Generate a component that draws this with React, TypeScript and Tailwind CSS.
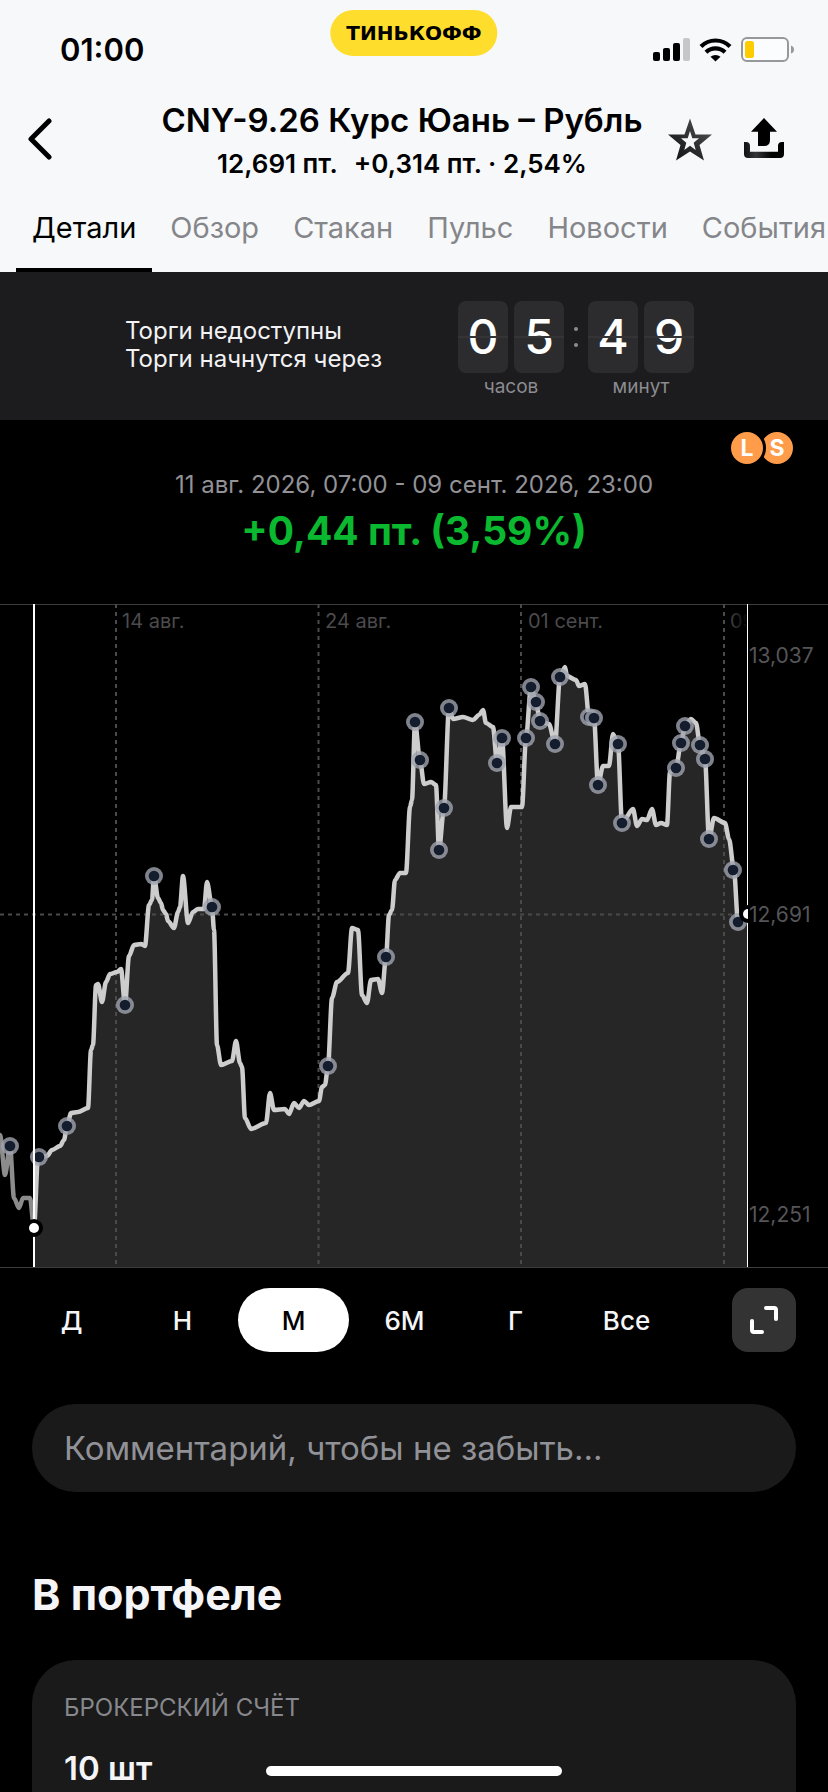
import { useState } from "react";
import clsx from "clsx";

const tabs = ["Детали", "Обзор", "Стакан", "Пульс", "Новости", "События"];
const ranges = ["Д", "Н", "М", "6М", "Г", "Все"];

const pastLine = "0,1135 5,1175 10,1146 14,1198 19,1208 23,1198 30,1198 34,1228";

const priceLine =
  "34,1228 38,1157 47,1156 52,1150 60,1146 64,1140 67,1126 71,1113 78,1112 88,1108 91,1050 93,1045 96,985 98,984 102,1002 106,982 110,974 117,972 121,969 125,1005 " +
  "129,956 134,945 141,944 145,946 149,905 152,900 154,876 158,898 161,903 163,910 166,914 168,921 174,928 178,912 180,907 183,876 188,923 193,912 198,909 204,909 207,882 212,907 " +
  "214,930 217,1045 221,1065 232,1061 236,1041 240,1063 242,1067 245,1118 251,1129 266,1123 270,1093 274,1110 285,1109 289,1114 294,1103 299,1108 304,1101 309,1105 319,1101 322,1087 325,1085 " +
  "328,1066 332,998 337,982 348,973 352,928 358,930 362,995 367,1003 371,980 378,979 382,993 386,957 389,915 392,910 395,880 400,873 406,873 410,807 412,800 415,722 " +
  "420,760 424,784 431,782 436,785 439,850 444,808 449,708 453,719 463,717 473,720 479,715 483,710 486,723 493,727 497,763 502,738 507,828 511,807 522,807 526,738 531,687 " +
  "536,702 540,721 549,724 555,744 560,677 565,667 567,676 576,680 579,686 585,684 589,717 594,718 598,785 603,766 609,766 613,734 618,744 622,823 633,809 637,826 642,819 647,820 " +
  "652,809 656,825 661,823 667,825 670,772 676,768 681,743 685,726 691,719 696,723 700,745 705,759 709,839 714,818 725,823 729,839 734,870 738,922 748,914";

const deals = [
  [10, 1146],
  [39, 1157],
  [67, 1126],
  [125, 1005],
  [154, 876],
  [212, 907],
  [328, 1066],
  [386, 957],
  [415, 722],
  [420, 760],
  [439, 850],
  [444, 808],
  [449, 708],
  [497, 763],
  [502, 738],
  [526, 738],
  [531, 687],
  [536, 702],
  [540, 721],
  [555, 744],
  [560, 677],
  [589, 717],
  [594, 718],
  [598, 785],
  [618, 744],
  [622, 823],
  [676, 768],
  [681, 743],
  [685, 726],
  [700, 745],
  [705, 759],
  [709, 839],
  [733, 870],
  [738, 922],
];

// eases every segment in and out so the peaks come out rounded
const toPath = (line: string) => {
  const points = line.split(" ").map((p) => p.split(",").map(Number));
  return points
    .map(([x, y], i) => {
      if (i === 0) return `M${x} ${y}`;
      const [px, py] = points[i - 1];
      const ease = (x - px) * 0.3;
      return `C${px + ease} ${py} ${x - ease} ${y} ${x} ${y}`;
    })
    .join("");
};

const StatusBar = () => {
  return (
    <div className="relative flex h-[98px] justify-between pl-[60px] pr-[34px]">
      <span className="pt-8 text-[31px] leading-9 font-semibold">01:00</span>
      <div className="absolute top-[10px] left-1/2 flex h-[46px] -translate-x-1/2 items-center rounded-full bg-[#ffdd2d] px-4 font-['DejaVu_Sans',sans-serif] text-[20px] font-bold">
        ТИНЬКОФФ
      </div>
      <svg className="mt-9 h-7 w-[142px]" viewBox="652 36 142 28">
        <rect x="653" y="52" width="7" height="9" rx="2" />
        <rect x="663" y="48" width="7" height="13" rx="2" />
        <rect x="673" y="43" width="7" height="18" rx="2" />
        <rect x="683" y="38" width="7" height="23" rx="2" fill="#c6c7c9" />
        <g fill="none" stroke="#000" strokeWidth="4.2">
          <path d="M701 46.500a20.500 20.500 0 0 1 29 0" />
          <path d="M706 52.300a13.500 13.500 0 0 1 19 0" />
        </g>
        <path d="M710.500 56.800a7.500 7.500 0 0 1 10 0l-5 4.700z" />
        <rect x="742" y="38" width="46" height="23" rx="5" fill="#fff" fillOpacity=".5" stroke="#97989c" strokeWidth="2" />
        <rect x="745" y="41" width="9" height="17" rx="2.500" fill="#ffcc00" />
        <path d="M791 45.500q3 1 3 4t-3 4z" fill="#97989c" />
      </svg>
    </div>
  );
};

const Header = () => {
  const [active, setActive] = useState("Детали");

  return (
    <header className="bg-[#f7f8fa] text-black">
      <StatusBar />
      <div className="flex h-[86px] pr-11 pl-7">
        <button aria-label="Назад" className="flex w-28 shrink-0 items-start pt-5">
          <svg className="h-[42px] w-6" viewBox="0 0 24 42" fill="none" stroke="#000" strokeWidth="5">
            <path d="M21 3 3 21l18 18" strokeLinecap="round" strokeLinejoin="round" />
          </svg>
        </button>
        <div className="flex-1 text-center whitespace-nowrap">
          <h1 className="flex h-11 items-center justify-center text-[33px] leading-11 font-semibold">CNY-9.26 Курс Юань – Рубль</h1>
          <p className="flex justify-center gap-4 text-[26px] leading-11 font-semibold">
            <span>12,691 пт.</span>
            <span>+0,314 пт. · 2,54%</span>
          </p>
        </div>
        <div className="flex shrink-0 items-start gap-8 pt-5 pl-1">
          <button aria-label="В избранное">
            <svg className="h-11 w-11" viewBox="668 118 44 44">
              <defs>
                <linearGradient id="star" x1="1" y1="0" x2="0" y2="1">
                  <stop offset="0" stopColor="#55585a" />
                  <stop offset=".6" stopColor="#26282a" />
                  <stop offset="1" stopColor="#111" />
                </linearGradient>
              </defs>
              <path
                fill="url(#star)"
                fillRule="evenodd"
                d="M690 118.500 695.500 134.500H712L699.500 145 704 160.500 690 151.500 676 160.500 680.500 145 668 134.500H684.500zM690 131 687.700 138.300H681L686.300 142.700 684.300 150 690 145.700 695.700 150 693.700 142.700 699 138.300H692.300z"
              />
            </svg>
          </button>
          <button aria-label="Поделиться">
            <svg className="h-11 w-10" viewBox="744 118 40 44">
              <defs>
                <linearGradient id="tray" x1="0" y1="0" x2="1" y2="0">
                  <stop offset="0" stopColor="#111" />
                  <stop offset=".3" stopColor="#333637" />
                  <stop offset=".7" stopColor="#000" />
                </linearGradient>
              </defs>
              <path d="M764 118 777 131.700H770V140Q770 146 764 146H758V131.700H751z" />
              <path
                fill="url(#tray)"
                d="M744 142h2q4 0 4 4v5.700h28V146q0-4 4-4h2v12q0 4-4 4h-32q-4 0-4-4z"
              />
            </svg>
          </button>
        </div>
      </div>
      <nav className="flex h-[88px] gap-[2px] overflow-hidden pl-4">
        {tabs.map((tab) => (
          <button
            key={tab}
            onClick={() => setActive(tab)}
            className={clsx(
              "flex shrink-0 items-center border-b-4 px-4 pt-1 text-[29px]",
              tab === active ? "border-black text-black" : "border-transparent text-[#85868a]"
            )}
          >
            {tab}
          </button>
        ))}
      </nav>
    </header>
  );
};

const Digits = ({ value, label }: { value: string; label: string }) => {
  return (
    <div className="flex flex-col items-center">
      <div className="flex gap-[6px]">
        {value.split("").map((digit, i) => (
          <span
            key={i}
            className="relative flex h-18 w-[50px] items-center justify-center rounded-lg bg-[#2c2c2e] text-[48px] font-medium text-white"
          >
            {digit}
            <span className="absolute inset-x-0 top-[35px] h-[2px] bg-[#343436]" />
          </span>
        ))}
      </div>
      <span className="text-[19px] leading-7 text-[#8b8b90]">{label}</span>
    </div>
  );
};

const Countdown = () => {
  return (
    <section className="flex h-[148px] items-start bg-[#1c1c1e] pt-[29px] pl-[125px]">
      <p className="w-[333px] pt-4 text-[24px] leading-7 text-[#f2f2f4]">
        Торги недоступны
        <br />
        Торги начнутся через
      </p>
      <Digits value="05" label="часов" />
      <span className="flex w-6 flex-col items-center gap-3 pt-[26px]">
        <i className="h-1 w-1 rounded-full bg-[#8b8b90]" />
        <i className="h-1 w-1 rounded-full bg-[#8b8b90]" />
      </span>
      <Digits value="49" label="минут" />
    </section>
  );
};

const Chart = () => {
  return (
    <svg className="block w-full" viewBox="0 604 828 664" fontSize="20" fill="#4b4b4d">
      <defs>
        <linearGradient id="fade" gradientUnits="userSpaceOnUse" x1="728" y1="0" x2="748" y2="0">
          <stop offset="0" stopColor="#4b4b4d" />
          <stop offset="1" stopColor="#000" />
        </linearGradient>
        <clipPath id="plot">
          <rect x="0" y="604" width="748" height="664" />
        </clipPath>
      </defs>
      <path d={`${toPath(priceLine)}V1267H34z`} fill="#262626" />
      <path d="M0 604.500H828M0 1267.500H828" stroke="#3c3c3c" />
      <path
        d="M116 604V1267M318.500 604V1267M521 604V1267M724 604V1267M0 914.500H748"
        stroke="#4a4a4a"
        strokeWidth="2"
        strokeDasharray="4 4"
      />
      <text x="122" y="628">14 авг.</text>
      <text x="325" y="628">24 авг.</text>
      <text x="528" y="628">01 сент.</text>
      <g clipPath="url(#plot)">
        <text x="730" y="628" fill="url(#fade)">09 сент.</text>
        <g fill="none" strokeWidth="4.500" strokeLinejoin="round" strokeLinecap="round">
          <path d={toPath(pastLine)} stroke="#8c8c8c" />
          <path d={toPath(priceLine)} stroke="#cdcdcd" />
        </g>
        {deals.map(([x, y]) => (
          <g key={`${x}-${y}`}>
            <circle cx={x} cy={y} r="9" fill="#a0a4ae" fillOpacity=".8" />
            <circle cx={x} cy={y} r="5.300" fill="#141d2e" />
          </g>
        ))}
      </g>
      <path d="M34 604V1267" stroke="#fff" strokeWidth="2" />
      <path d="M747.500 604V1267" stroke="#fff" />
      <circle cx="34" cy="1228" r="9" fill="#000" />
      <circle cx="34" cy="1228" r="5" fill="#fff" />
      <g clipPath="url(#plot)">
        <circle cx="748" cy="914" r="9" fill="#000" />
        <circle cx="748" cy="914" r="5" fill="#fff" />
      </g>
      <g fontSize="21" fill="#555557">
        <text x="749" y="663">13,037</text>
        <text x="749" y="922">12,691</text>
        <text x="749" y="1222">12,251</text>
      </g>
    </svg>
  );
};

const RangePicker = () => {
  const [range, setRange] = useState("М");

  return (
    <div className="flex items-center justify-between pt-5 pr-8 pl-4">
      <div className="flex">
        {ranges.map((item) => (
          <button
            key={item}
            onClick={() => setRange(item)}
            className={clsx(
              "h-16 w-[111px] rounded-full text-[26px] font-medium",
              item === range ? "bg-white text-black" : "text-[#f5f5f7]"
            )}
          >
            {item}
          </button>
        ))}
      </div>
      <button aria-label="На весь экран" className="flex h-16 w-16 items-center justify-center rounded-2xl bg-[#333]">
        <svg className="h-7 w-7" viewBox="0 0 28 28" fill="none" stroke="#fff" strokeWidth="4" strokeLinecap="round">
          <path d="M16 2h8q2 0 2 2v9" strokeLinejoin="round" />
          <path d="M2 15v9q0 2 2 2h8" strokeLinejoin="round" />
        </svg>
      </button>
    </div>
  );
};

export default function App() {
  return (
    <div className="flex h-screen flex-col overflow-hidden bg-black font-[Inter,'Noto_Sans',sans-serif] text-[#f5f5f7]">
      <Header />
      <Countdown />

      <section className="relative h-[184px] shrink-0 pt-[47px] text-center">
        <div className="absolute top-[9px] right-8 flex text-[23px] leading-none font-bold text-white">
          <span className="z-10 flex h-[38px] w-[38px] items-center justify-center rounded-full border-3 border-black bg-[#ff9c4a]">
            L
          </span>
          <span className="-ml-2 flex h-[38px] w-[38px] items-center justify-center rounded-full border-3 border-black bg-[#ff9c4a]">
            S
          </span>
        </div>
        <p className="text-[24px] leading-9 text-[#929297]">11 авг. 2026, 07:00 - 09 сент. 2026, 23:00</p>
        <p className="text-[39px] leading-14 font-bold text-[#0ab92f]">+0,44 пт. (3,59%)</p>
      </section>

      <Chart />
      <RangePicker />

      <div className="px-8 pt-[52px]">
        <input
          type="text"
          aria-label="Комментарий"
          placeholder="Комментарий, чтобы не забыть..."
          className="h-[88px] w-full rounded-full bg-[#1a1a1a] px-8 text-[33px] placeholder:text-[#919298]"
        />
      </div>

      <h2 className="px-8 pt-[76px] text-[43px] leading-[52px] font-bold">В портфеле</h2>

      <section className="mx-8 mt-10 flex-1 rounded-t-[44px] bg-[#1a1a1a] px-8 pt-8">
        <h3 className="text-[24px] leading-8 text-[#87888d]">БРОКЕРСКИЙ СЧЁТ</h3>
        <p className="pt-6 text-[33px] leading-10 font-semibold">10 шт</p>
      </section>

      <div className="fixed bottom-4 left-1/2 h-[10px] w-[296px] -translate-x-1/2 rounded-full bg-white" />
    </div>
  );
}
